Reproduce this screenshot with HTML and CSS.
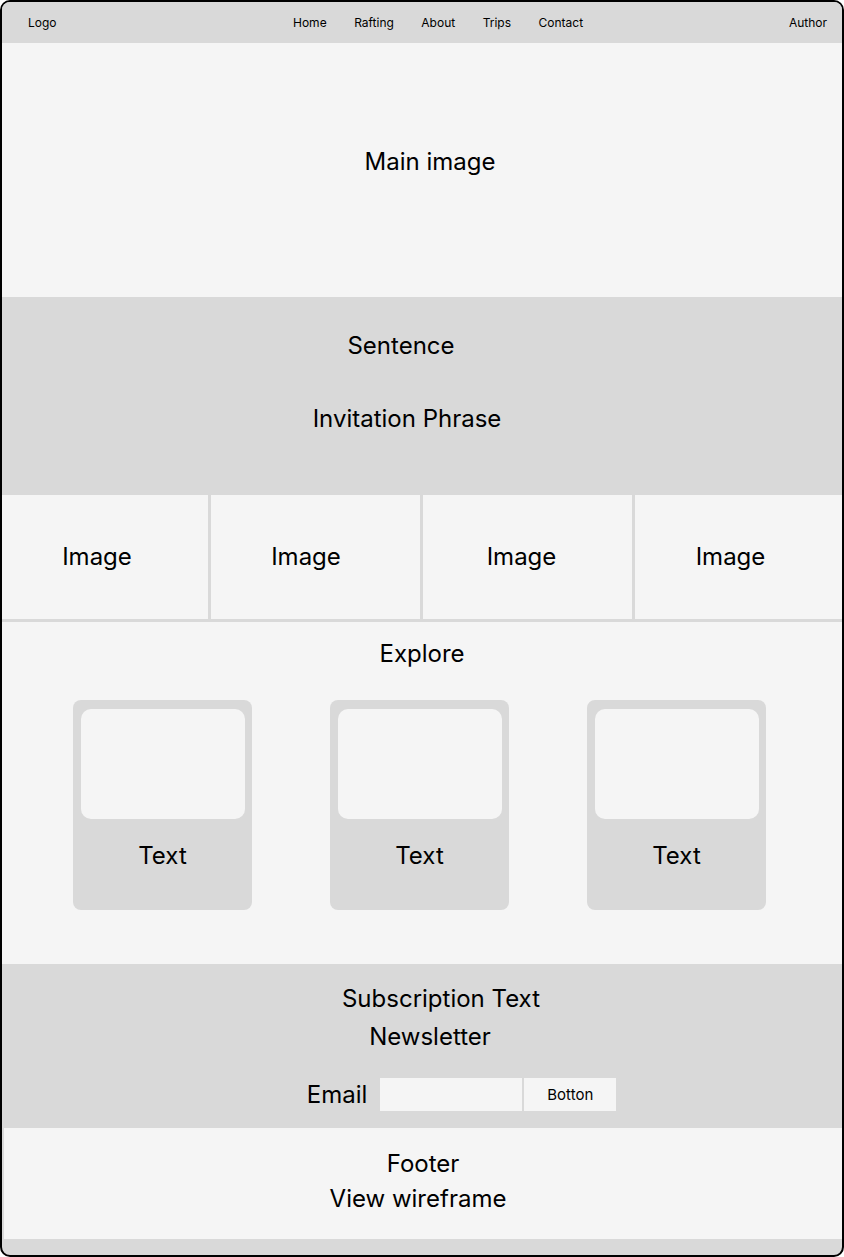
FILE: index.html
```html
<!DOCTYPE html>
<html lang="en">
<head>
<meta charset="utf-8">
<title>Wireframe</title>
<link rel="stylesheet" href="styles.css">
</head>
<body>
<div class="frame">
  <header class="topbar">
    <div class="logo">Logo</div>
    <nav class="nav">
      <a>Home</a>
      <a>Rafting</a>
      <a>About</a>
      <a>Trips</a>
      <a>Contact</a>
    </nav>
    <div class="author">Author</div>
  </header>

  <section class="hero">
    <p class="big hero-text">Main image</p>
  </section>

  <section class="band">
    <p class="big sentence">Sentence</p>
    <p class="big invitation">Invitation Phrase</p>
  </section>

  <section class="images">
    <div class="cell"><span class="big">Image</span></div>
    <div class="cell cell-2"><span class="big">Image</span></div>
    <div class="cell cell-3"><span class="big">Image</span></div>
    <div class="cell"><span class="big">Image</span></div>
  </section>

  <section class="explore">
    <p class="big explore-title">Explore</p>
    <div class="cards">
      <div class="card"><div class="card-img"></div><p class="big card-text">Text</p></div>
      <div class="card"><div class="card-img"></div><p class="big card-text">Text</p></div>
      <div class="card"><div class="card-img"></div><p class="big card-text">Text</p></div>
    </div>
  </section>

  <section class="subscribe">
    <p class="big sub-text">Subscription Text</p>
    <p class="big newsletter">Newsletter</p>
    <div class="email-row">
      <label class="big email-label">Email</label>
      <div class="email-input"></div>
      <div class="email-btn">Botton</div>
    </div>
  </section>

  <footer class="footer">
    <p class="big footer-title">Footer</p>
    <p class="big footer-link">View wireframe</p>
  </footer>
</div>
</body>
</html>
```

FILE: styles.css
```css
* { box-sizing: border-box; }

html, body {
  margin: 0;
  padding: 0;
  background: #ffffff;
}

body {
  font-family: Inter, "Noto Sans", "Liberation Sans", sans-serif;
  color: #000;
}

p { margin: 0; }

.frame {
  width: 844px;
  height: 1257px;
  border: 2px solid #000;
  border-radius: 10px;
  overflow: hidden;
  background: #d9d9d9;
  display: flex;
  flex-direction: column;
}

.big {
  font-size: 24px;
  line-height: 29px;
}

/* header */
.topbar {
  height: 41px;
  flex: none;
  background: #d9d9d9;
  display: grid;
  grid-template-columns: 291px auto 1fr;
  align-items: center;
  font-size: 12px;
  line-height: 15px;
}

.logo { padding-left: 26px; }

.nav {
  display: flex;
  gap: 27.5px;
}

.nav a { color: #000; }

.author {
  justify-self: end;
  padding-right: 15px;
}

/* hero */
.hero {
  height: 254px;
  flex: none;
  background: #f5f5f5;
  padding-top: 104px;
  text-align: center;
}

.hero-text { padding-left: 16px; }

/* band */
.band {
  height: 198px;
  flex: none;
  background: #d9d9d9;
  padding-top: 34px;
  text-align: center;
}

.sentence { padding-right: 42px; }
.invitation { padding-right: 30px; margin-top: 44px; }

/* image row */
.images {
  height: 127px;
  flex: none;
  display: grid;
  grid-template-columns: 209px 212px 212px 1fr;
  background: #f5f5f5;
  border-bottom: 3px solid #d9d9d9;
}

.cell {
  display: flex;
  align-items: center;
  justify-content: center;
  padding-right: 16px;
  padding-bottom: 1px;
  border-right: 3px solid #d9d9d9;
}

.cell-2 { padding-right: 19px; }
.cell-3 { padding-right: 12px; }

.cell:last-child { border-right: none; }

/* explore */
.explore {
  height: 342px;
  flex: none;
  background: #f5f5f5;
  padding-top: 17px;
  text-align: center;
}

.cards {
  display: flex;
  justify-content: center;
  gap: 78px;
  padding-right: 6px;
  margin-top: 32px;
}

.card {
  width: 179px;
  height: 210px;
  background: #d9d9d9;
  border-radius: 8px;
  padding: 9px 7px 0 8px;
}

.card-img {
  height: 110px;
  background: #f5f5f5;
  border-radius: 10px;
}

.card-text { margin-top: 22px; }

/* subscribe */
.subscribe {
  height: 164px;
  flex: none;
  background: #d9d9d9;
  padding-top: 20px;
  text-align: center;
}

.sub-text { padding-left: 38px; }
.newsletter { padding-left: 16px; margin-top: 9px; }

.email-row {
  display: flex;
  justify-content: center;
  align-items: center;
  padding-left: 79px;
  margin-top: 27px;
}

.email-label { margin-right: 13px; }

.email-input {
  width: 142px;
  height: 33px;
  background: #f5f5f5;
  margin-right: 2px;
}

.email-btn {
  width: 92px;
  height: 33px;
  background: #f5f5f5;
  font-size: 15px;
  line-height: 33px;
  text-align: center;
}

/* footer */
.footer {
  height: 111px;
  flex: none;
  margin-left: 2px;
  background: #f5f5f5;
  padding-top: 21px;
  text-align: center;
}

.footer-link { margin-top: 6px; padding-right: 10px; }
```
